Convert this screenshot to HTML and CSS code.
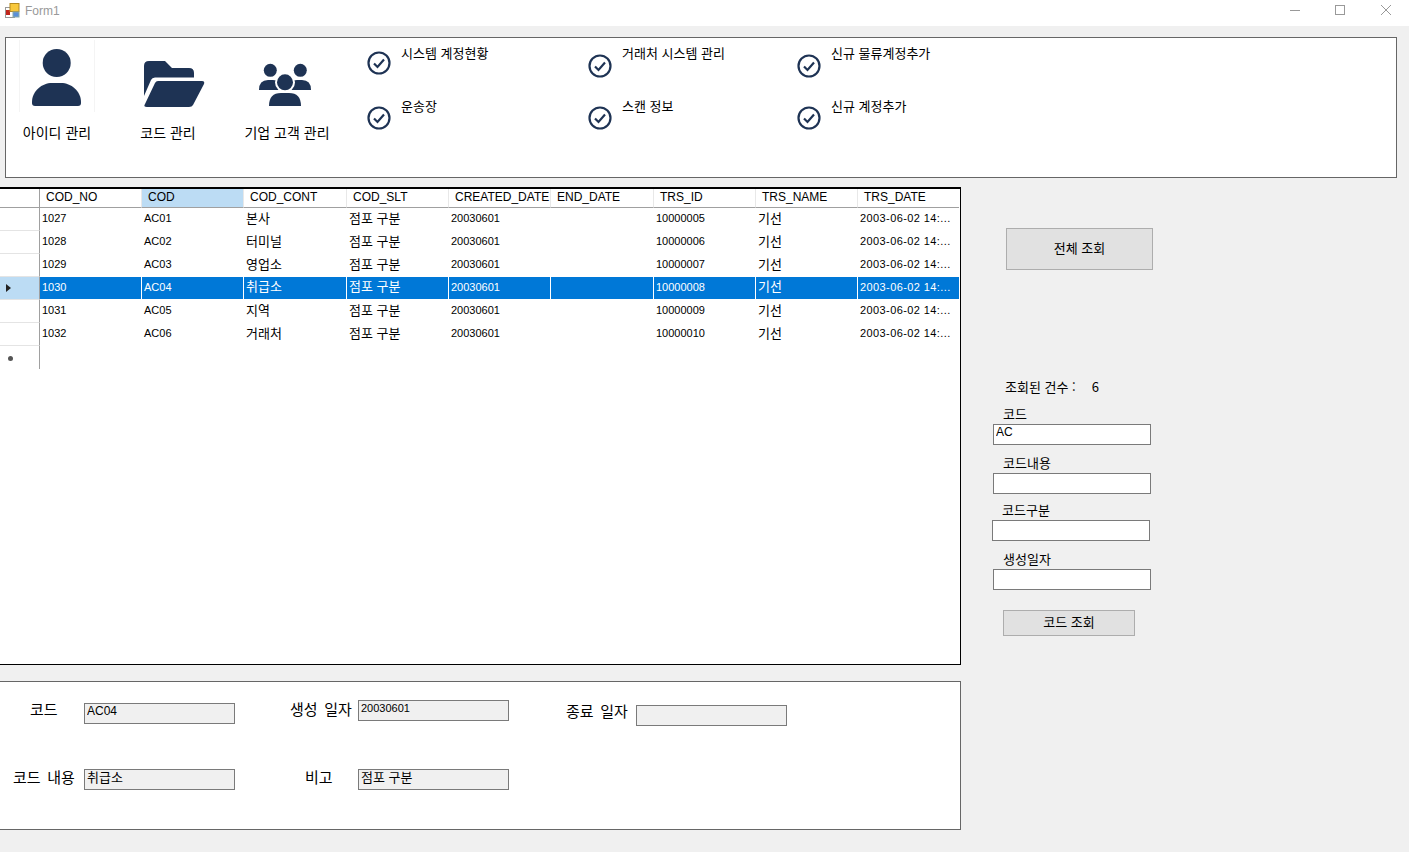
FILE: index.html
```html
<!DOCTYPE html>
<html lang="ko">
<head>
  <meta charset="UTF-8">
  <title>Form1</title>
  <link rel="stylesheet" href="styles.css">
</head>
<body>
  <div class="titlebar">
    <svg class="app-icon" width="15" height="15" viewBox="0 0 15 15">
      <rect x="0.5" y="4.5" width="9" height="10" fill="#fff" stroke="#999"/>
      <rect x="1" y="7" width="4" height="5" fill="#c0241c"/>
      <rect x="5" y="0.5" width="9" height="8" fill="#f8c83c" stroke="#b58a20"/>
      <rect x="8" y="9" width="6" height="5" fill="#5b8fd8" stroke="#8aa"/>
    </svg>
    <span class="form-title">Form1</span>
    <div class="win-buttons">
      <svg width="12" height="12" viewBox="0 0 12 12"><path d="M2 6.5H12" stroke="#999" fill="none"/></svg>
      <svg width="12" height="12" viewBox="0 0 12 12"><rect x="1.5" y="1.5" width="9" height="9" stroke="#999" fill="none"/></svg>
      <svg width="12" height="12" viewBox="0 0 12 12"><path d="M1 1L11 11M11 1L1 11" stroke="#999" fill="none"/></svg>
    </div>
  </div>

  <div class="top-panel">
    <div class="big-btn btn-user">
      <div class="big-icon user-box">
        <svg width="76" height="72" viewBox="19 40 76 72">
          <circle cx="56.7" cy="63" r="14" fill="#1e3354"/>
          <path d="M32 102C32 91 42 83 52 83H61C71 83 81 91 81 102V103Q81 106 78 106H35Q32 106 32 103Z" fill="#1e3354"/>
        </svg>
      </div>
      <span>아이디 관리</span>
    </div>
    <div class="big-btn btn-code">
      <div class="big-icon">
        <svg width="76" height="72" viewBox="130 40 76 72">
          <path d="M144 66Q144 61 149 61H165L172 68H189Q194 68 194 73V77.5H155Q152 77.5 151 80L144 96Z" fill="#1e3354"/>
          <path d="M158 81H202Q205 81 204 84L193 105Q192 107 189 107H147Q143 107 145 104L155 83Q156 81 158 81Z" fill="#1e3354"/>
        </svg>
      </div>
      <span>코드 관리</span>
    </div>
    <div class="big-btn btn-corp">
      <div class="big-icon">
        <svg width="76" height="72" viewBox="249 40 76 72">
          <circle cx="270.3" cy="70.3" r="6.5" fill="#1e3354"/>
          <circle cx="300.3" cy="70.3" r="6.5" fill="#1e3354"/>
          <path d="M259 90Q259 80 268 80H273Q277 80 279 82V90Z" fill="#1e3354"/>
          <path d="M311 90Q311 80 302 80H297Q293 80 291 82V90Z" fill="#1e3354"/>
          <circle cx="285" cy="82.3" r="10" fill="#fff"/>
          <circle cx="285" cy="82.3" r="8" fill="#1e3354"/>
          <path d="M269 106Q269 93 281 93H289Q301 93 301 106Z" fill="#1e3354"/>
        </svg>
      </div>
      <span>기업 고객 관리</span>
    </div>

    <div class="checks">
      <div class="check-item"><svg class="check" viewBox="0 0 24 24"><circle cx="12" cy="12" r="10.5"/><path d="M7 12.5L10.5 16L17 8.5"/></svg><span>시스템 계정현황</span></div>
      <div class="check-item low"><svg class="check" viewBox="0 0 24 24"><circle cx="12" cy="12" r="10.5"/><path d="M7 12.5L10.5 16L17 8.5"/></svg><span>거래처 시스템 관리</span></div>
      <div class="check-item low"><svg class="check" viewBox="0 0 24 24"><circle cx="12" cy="12" r="10.5"/><path d="M7 12.5L10.5 16L17 8.5"/></svg><span>신규 물류계정추가</span></div>
      <div class="check-item mid"><svg class="check" viewBox="0 0 24 24"><circle cx="12" cy="12" r="10.5"/><path d="M7 12.5L10.5 16L17 8.5"/></svg><span>운송장</span></div>
      <div class="check-item mid"><svg class="check" viewBox="0 0 24 24"><circle cx="12" cy="12" r="10.5"/><path d="M7 12.5L10.5 16L17 8.5"/></svg><span>스캔 정보</span></div>
      <div class="check-item mid"><svg class="check" viewBox="0 0 24 24"><circle cx="12" cy="12" r="10.5"/><path d="M7 12.5L10.5 16L17 8.5"/></svg><span>신규 계정추가</span></div>
    </div>
  </div>

  <div class="main">
    <div class="left">
      <div class="grid-box">
        <table class="grid">
          <colgroup>
            <col class="col-head">
            <col class="col-a"><col class="col-a"><col class="col-b"><col class="col-a"><col class="col-a">
            <col class="col-b"><col class="col-a"><col class="col-a"><col class="col-last">
          </colgroup>
          <thead>
            <tr>
              <th class="row-head"></th>
              <th>COD_NO</th>
              <th class="active">COD</th>
              <th>COD_CONT</th>
              <th>COD_SLT</th>
              <th>CREATED_DATE</th>
              <th>END_DATE</th>
              <th>TRS_ID</th>
              <th>TRS_NAME</th>
              <th>TRS_DATE</th>
            </tr>
          </thead>
          <tbody>
            <tr>
              <td class="row-head"></td>
              <td>1027</td><td>AC01</td><td class="ko">본사</td><td class="ko">점포 구분</td><td>20030601</td><td></td><td>10000005</td><td class="ko">기선</td><td class="dt">2003-06-02 14:...</td>
            </tr>
            <tr>
              <td class="row-head"></td>
              <td>1028</td><td>AC02</td><td class="ko">터미널</td><td class="ko">점포 구분</td><td>20030601</td><td></td><td>10000006</td><td class="ko">기선</td><td class="dt">2003-06-02 14:...</td>
            </tr>
            <tr>
              <td class="row-head"></td>
              <td>1029</td><td>AC03</td><td class="ko">영업소</td><td class="ko">점포 구분</td><td>20030601</td><td></td><td>10000007</td><td class="ko">기선</td><td class="dt">2003-06-02 14:...</td>
            </tr>
            <tr class="selected">
              <td class="row-head"><i class="arrow"></i></td>
              <td>1030</td><td>AC04</td><td class="ko">취급소</td><td class="ko">점포 구분</td><td>20030601</td><td></td><td>10000008</td><td class="ko">기선</td><td class="dt">2003-06-02 14:...</td>
            </tr>
            <tr>
              <td class="row-head"></td>
              <td>1031</td><td>AC05</td><td class="ko">지역</td><td class="ko">점포 구분</td><td>20030601</td><td></td><td>10000009</td><td class="ko">기선</td><td class="dt">2003-06-02 14:...</td>
            </tr>
            <tr>
              <td class="row-head"></td>
              <td>1032</td><td>AC06</td><td class="ko">거래처</td><td class="ko">점포 구분</td><td>20030601</td><td></td><td>10000010</td><td class="ko">기선</td><td class="dt">2003-06-02 14:...</td>
            </tr>
            <tr>
              <td class="row-head new-row"><i class="star"></i></td>
              <td colspan="9"></td>
            </tr>
          </tbody>
        </table>
      </div>

      <div class="detail">
        <label class="d-label l-code">코드</label>
        <input class="d-input i-code" value="AC04" readonly>
        <label class="d-label l-date">생성 일자</label>
        <input class="d-input i-date" value="20030601" readonly>
        <label class="d-label l-end">종료 일자</label>
        <input class="d-input i-end" value="" readonly>
        <label class="d-label l-cont">코드 내용</label>
        <input class="d-input ko-input" value="취급소" readonly>
        <label class="d-label l-note">비고</label>
        <input class="d-input ko-input" value="점포 구분" readonly>
      </div>
    </div>

    <div class="side">
      <button class="btn btn-all">전체 조회</button>
      <div class="count"><span>조회된 건수 :</span><span>6</span></div>
      <label class="s-label">코드</label>
      <input class="s-input" value="AC">
      <label class="s-label">코드내용</label>
      <input class="s-input">
      <label class="s-label shift up">코드구분</label>
      <input class="s-input shift">
      <label class="s-label">생성일자</label>
      <input class="s-input">
      <button class="btn btn-search">코드 조회</button>
    </div>
  </div>
</body>
</html>
```
FILE: styles.css
```css
/* Form1 window */
body {
  margin: 0;
  height: 852px;
  overflow: hidden;
  background-color: #f0f0f0;
  font-family: "Liberation Sans", "Noto Sans CJK KR", sans-serif;
  font-size: 12px;
  color: #000;
}
input, button {
  font-family: "Liberation Sans", "Noto Sans CJK KR", sans-serif;
}

/* Title bar */
.titlebar {
  display: flex;
  align-items: center;
  height: 26px;
  padding-left: 5px;
  background-color: #fff;
}
.app-icon {
  margin-top: -6px;
}
.form-title {
  margin-left: 5px;
  margin-top: -5px;
  color: #999;
  font-size: 12px;
}
.win-buttons {
  display: flex;
  gap: 34px;
  margin-left: auto;
  margin-right: 17px;
  margin-top: -6px;
}

/* Top panel */
.top-panel {
  display: flex;
  box-sizing: border-box;
  height: 141px;
  margin: 11px 12px 0 5px;
  border: 1px solid #666;
  background-color: #fff;
}
.big-btn {
  display: flex;
  flex-direction: column;
  align-items: center;
  width: 76px;
  padding-top: 2px;
  font-family: "Noto Sans CJK KR", sans-serif;
  font-size: 14px;
  white-space: nowrap;
}
.big-btn span {
  margin-top: 10px;
  line-height: 20px;
}
.btn-user {
  margin-left: 13px;
}
.btn-code {
  margin-left: 35px;
}
.btn-corp {
  margin-left: 43px;
}
.big-icon {
  box-sizing: border-box;
  width: 76px;
  height: 72px;
}
.user-box {
  border-left: 1px solid #f4f4f4;
  border-right: 1px solid #f4f4f4;
}
.big-icon svg {
  display: block;
}
.user-box svg {
  margin-left: -1px;
}
.checks {
  display: grid;
  grid-template-columns: 221px 209px 200px;
  grid-template-rows: 53px 53px;
  margin-left: 42px;
  padding-top: 6px;
}
.check-item {
  display: flex;
  align-items: flex-start;
  font-family: "Noto Sans CJK KR", sans-serif;
  font-size: 13px;
}
.check-item span {
  margin-left: 10px;
  line-height: 18px;
}
.check {
  flex: none;
  width: 24px;
  height: 24px;
  margin-top: 7px;
  fill: none;
  stroke: #1e3354;
  stroke-width: 2.2;
}
.check-item.low .check {
  margin-top: 10px;
}
.check-item.mid .check {
  margin-top: 8.5px;
}

/* Main area */
.main {
  display: flex;
  margin-top: 9px;
}
.left {
  width: 961px;
  flex: none;
}

/* Data grid */
.grid-box {
  box-sizing: border-box;
  height: 478px;
  border-top: 2px solid #000;
  border-right: 1px solid #000;
  border-bottom: 1px solid #000;
  background-color: #fff;
}
.grid {
  table-layout: fixed;
  width: 959px;
  border-collapse: separate;
  border-spacing: 0;
}
.col-head { width: 40px; }
.col-a { width: 102px; }
.col-b { width: 103px; }
.col-last { width: 101px; }
.grid th {
  box-sizing: border-box;
  height: 19px;
  padding: 0 0 2px 6px;
  border-right: 1px solid #e8e8e8;
  border-bottom: 1px solid #a0a0a0;
  font-weight: normal;
  font-size: 12px;
  text-align: left;
  white-space: nowrap;
  overflow: hidden;
}
.grid th.active {
  background-color: #bcdcf4;
}
.grid th:last-child {
  border-right: none;
}
.grid td {
  box-sizing: border-box;
  height: 23px;
  padding: 0 0 3px 2px;
  font-size: 11px;
  line-height: 16px;
  white-space: nowrap;
  overflow: hidden;
}
.grid td.ko {
  padding-bottom: 4px;
  font-family: "Noto Sans CJK KR", sans-serif;
  font-size: 13px;
}
.grid td.dt {
  letter-spacing: 0.4px;
}
.grid .row-head {
  padding: 0;
  border-right: 1px solid #a0a0a0;
  border-bottom: 1px solid #e4e4e4;
}
.grid th.row-head {
  border-right-color: #a0a0a0;
  border-bottom-color: #a0a0a0;
}
.grid .new-row {
  border-bottom: none;
}
.selected td {
  height: 23px;
  border-right: 1px solid #fff;
  border-bottom: 1px solid #fff;
  background-color: #0078d7;
  color: #fff;
}
.selected td:last-child {
  border-right: none;
}
.grid .selected .row-head {
  border-right: 1px solid #a0a0a0;
  border-bottom: 1px solid #e4e4e4;
  background-color: #bcdcf4;
}
.arrow {
  display: block;
  width: 0;
  height: 0;
  margin-left: 6px;
  border-top: 4px solid transparent;
  border-bottom: 4px solid transparent;
  border-left: 5px solid #222;
}
.star {
  display: block;
  width: 5px;
  height: 5px;
  margin: 2px 0 0 8px;
  border-radius: 50%;
  background-color: #555;
}

/* Detail panel */
.detail {
  display: grid;
  grid-template-columns: 84px 151px 123px 151px 127px 151px;
  grid-template-rows: 87px 60px;
  box-sizing: border-box;
  height: 149px;
  margin-top: 16px;
  border-top: 1px solid #666;
  border-right: 1px solid #666;
  border-bottom: 1px solid #666;
  background-color: #fff;
}
.d-label {
  font-family: "Noto Sans CJK KR", sans-serif;
  font-size: 15px;
  line-height: 20px;
  word-spacing: 2.5px;
  white-space: nowrap;
}
.d-input {
  box-sizing: border-box;
  width: 151px;
  height: 21px;
  padding: 0 0 5px 2px;
  border: 1px solid #7a7a7a;
  background-color: #f0f0f0;
  font-size: 12px;
  outline: none;
}
.ko-input {
  padding: 0 0 6px 2px;
  font-family: "Noto Sans CJK KR", sans-serif;
  font-size: 13px;
}
.l-code {
  margin: 17px 0 0 30px;
}
.i-code {
  margin-top: 21px;
}
.l-date {
  margin: 17px 0 0 55px;
}
.i-date {
  margin-top: 18px;
  font-size: 11px;
}
.l-end {
  margin: 19px 0 0 57px;
}
.i-end {
  margin-top: 23px;
}
.l-cont {
  margin: -2px 0 0 13px;
}
.l-note {
  margin: -2px 0 0 70px;
}

/* Right side */
.side {
  display: flex;
  flex-direction: column;
  align-items: flex-start;
  padding-left: 32px;
  font-family: "Noto Sans CJK KR", sans-serif;
  font-size: 13px;
}
.btn {
  box-sizing: border-box;
  padding: 0 0 4px;
  border: 1px solid #adadad;
  background-color: #e1e1e1;
  font-family: "Noto Sans CJK KR", sans-serif;
  font-size: 13px;
}
.btn-all {
  width: 147px;
  height: 42px;
  margin: 41px 0 0 13px;
}
.count {
  display: flex;
  gap: 16px;
  margin: 108px 0 0 12px;
  line-height: 18px;
}
.s-label {
  margin: 9px 0 0 10px;
  line-height: 18px;
}
.s-label.up {
  margin-top: 7px;
}
.s-input {
  box-sizing: border-box;
  width: 158px;
  height: 21px;
  margin-top: 1px;
  padding: 0 0 5px 2px;
  border: 1px solid #7a7a7a;
  background-color: #fff;
  font-size: 12px;
  outline: none;
}
.shift {
  position: relative;
  left: -1px;
}
.btn-search {
  width: 132px;
  height: 26px;
  margin: 20px 0 0 10px;
}
```
